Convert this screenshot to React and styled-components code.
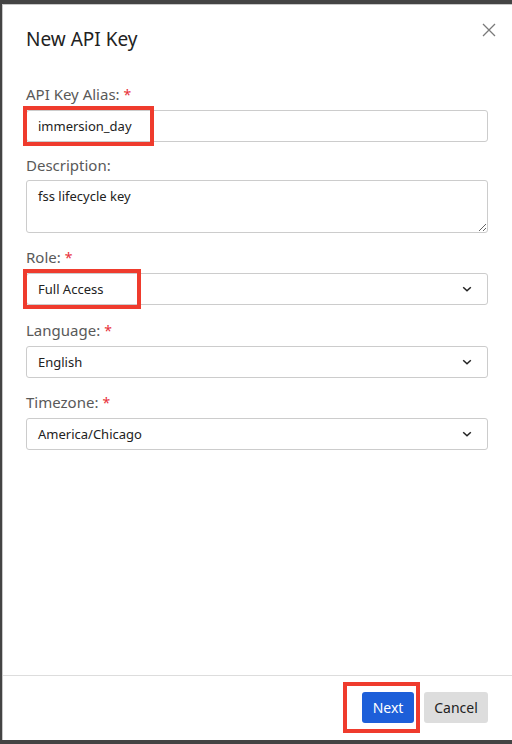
import React from "react";
import styled, { createGlobalStyle } from "styled-components";

const GlobalStyle = createGlobalStyle`
  html, body {
    margin: 0;
    padding: 0;
    background: #444444;
  }
  * {
    box-sizing: border-box;
  }
`;

const fields = [
  { label: "Description:", value: "fss lifecycle key", kind: "textarea", gap: "14px" },
  { label: "Role:", value: "Full Access", kind: "select", required: true, mark: "118px", gap: "15px" },
  { label: "Language:", value: "English", kind: "select", required: true, gap: "14px" },
  { label: "Timezone:", value: "America/Chicago", kind: "select", required: true },
];

const App = () => {
  return (
    <Page>
      <GlobalStyle />
      <Modal>
        <Header>
          <Title>New API Key</Title>
          <CloseButton aria-label="close">
            <svg width="14" height="14" viewBox="0 0 14 14">
              <path d="M1 1 L13 13 M13 1 L1 13" stroke="#7a7a7a" strokeWidth="1.3" />
            </svg>
          </CloseButton>
        </Header>
        <Body>
          <Field gap="13px">
            <Label>
              API Key Alias:<Star>*</Star>
            </Label>
            <BoxWrap>
              <TextInput readOnly value="immersion_day" />
              <Highlight width="131px" />
            </BoxWrap>
          </Field>
          {fields.map((f) => (
            <Field key={f.label} gap={f.gap}>
              <Label>
                {f.label}
                {f.required && <Star>*</Star>}
              </Label>
              <BoxWrap>
                {f.kind === "textarea" ? (
                  <TextArea readOnly value={f.value} />
                ) : (
                  <Select>
                    <span>{f.value}</span>
                    <svg width="10" height="6" viewBox="0 0 10 6">
                      <path d="M1.2 1.2 L5 4.8 L8.8 1.2" fill="none" stroke="#222" strokeWidth="1.5" />
                    </svg>
                  </Select>
                )}
                {f.mark && <Highlight width={f.mark} />}
              </BoxWrap>
            </Field>
          ))}
        </Body>
        <Footer>
          <NextWrap>
            <Button primary width="52px">Next</Button>
            <Highlight width="77px" tall />
          </NextWrap>
          <Button width="64px">Cancel</Button>
        </Footer>
      </Modal>
    </Page>
  );
};

export default App;

const Page = styled.div`
  width: 512px;
  height: 744px;
  padding: 4px 0 4px 2px;
  font-family: "Segoe UI", "Noto Sans", sans-serif;
`;

const Modal = styled.div`
  height: 736px;
  display: flex;
  flex-direction: column;
  background: #ffffff;
  border-left: 1px solid #c8c8c8;
  border-top: 1px solid #c8c8c8;
`;

const Header = styled.div`
  display: flex;
  justify-content: space-between;
  align-items: flex-start;
  padding: 20px 16px 0 23px;
  height: 79px;
`;

const Title = styled.div`
  font-size: 19px;
  line-height: 28px;
  color: #222222;
`;

const CloseButton = styled.div`
  display: flex;
  margin-top: -2px;
`;

const Body = styled.div`
  flex: 1;
  padding: 0 24px 0 23px;
`;

const Field = styled.div`
  margin-bottom: ${(props) => props.gap || "0px"};
`;

const Label = styled.div`
  font-size: 15px;
  line-height: 20px;
  color: #595959;
  margin-bottom: 5px;
`;

const Star = styled.span`
  color: #e8303a;
  margin-left: 4px;
  font-size: 14px;
`;

const BoxWrap = styled.div`
  position: relative;
  display: flex;
`;

const boxBase = `
  width: 100%;
  border: 1px solid #cccccc;
  border-radius: 3px;
  background: #ffffff;
  font-family: "Segoe UI", "Noto Sans", sans-serif;
  font-size: 13px;
  color: #222222;
  padding: 0 11px;
`;

const TextInput = styled.input`
  ${boxBase}
  height: 32px;
  outline: none;
`;

const TextArea = styled.textarea`
  ${boxBase}
  height: 53px;
  padding-top: 6px;
  resize: vertical;
  outline: none;
  line-height: 18px;
`;

const Select = styled.div`
  ${boxBase}
  height: 32px;
  display: flex;
  align-items: center;
  justify-content: space-between;
  padding-right: 15px;
`;

const Highlight = styled.div`
  position: absolute;
  left: ${(props) => (props.tall ? "-19px" : "-3px")};
  top: ${(props) => (props.tall ? "-10px" : "-4px")};
  width: ${(props) => props.width};
  height: ${(props) => (props.tall ? "51px" : "40px")};
  border: 4px solid #ef3b2d;
  pointer-events: none;
`;

const Footer = styled.div`
  height: 65px;
  border-top: 1px solid #dddddd;
  display: flex;
  justify-content: flex-end;
  align-items: center;
  gap: 10px;
  padding: 0 24px 1px 0;
`;

const NextWrap = styled.div`
  position: relative;
  display: flex;
`;

const Button = styled.div`
  width: ${(props) => props.width};
  height: 31px;
  display: flex;
  align-items: center;
  justify-content: center;
  border-radius: 3px;
  font-size: 14px;
  background: ${(props) => (props.primary ? "#1d5fd9" : "#dddddd")};
  color: ${(props) => (props.primary ? "#ffffff" : "#222222")};
`;
